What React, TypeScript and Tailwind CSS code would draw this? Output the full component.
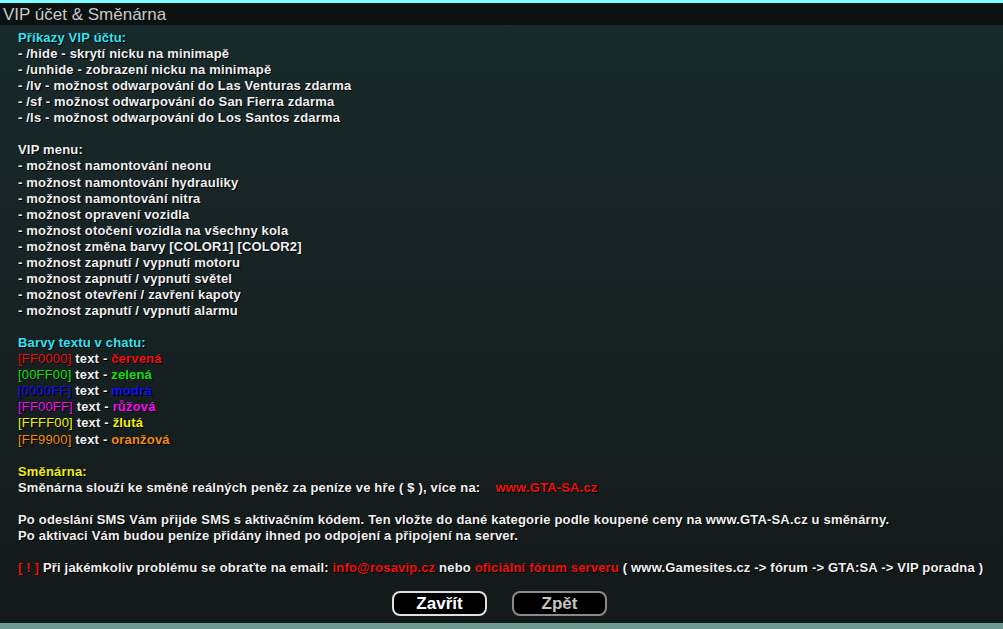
import React from 'react';

// SA:MP style dialog
const shadow = "[text-shadow:1px_1px_0_#000]";

const commands = [
    "- /hide - skrytí nicku na minimapě",
    "- /unhide - zobrazení nicku na minimapě",
    "- /lv - možnost odwarpování do Las Venturas zdarma",
    "- /sf - možnost odwarpování do San Fierra zdarma",
    "- /ls - možnost odwarpování do Los Santos zdarma",
];

const menu = [
    "- možnost namontování neonu",
    "- možnost namontování hydrauliky",
    "- možnost namontování nitra",
    "- možnost opravení vozidla",
    "- možnost otočení vozidla na všechny kola",
    "- možnost změna barvy [COLOR1] [COLOR2]",
    "- možnost zapnutí / vypnutí motoru",
    "- možnost zapnutí / vypnutí světel",
    "- možnost otevření / zavření kapoty",
    "- možnost zapnutí / vypnutí alarmu",
];

const colors = [
    { code: "[FF0000]", name: "červená", cls: "text-[#f01010]" },
    { code: "[00FF00]", name: "zelená", cls: "text-[#10e010]" },
    { code: "[0000FF]", name: "modrá", cls: "text-[#1010f0]" },
    { code: "[FF00FF]", name: "růžová", cls: "text-[#f010f0]" },
    { code: "[FFFF00]", name: "žlutá", cls: "text-[#f0f010]" },
    { code: "[FF9900]", name: "oranžová", cls: "text-[#f08c10]" },
];

const Blank = () => <div className="h-[16.06px]" />;

export default function App() {
    return (
        <div className="w-[1003px] h-[629px] flex flex-col bg-[#151b1b] font-['Liberation_Sans',Arial,sans-serif] overflow-hidden">
            <div className="h-[3px] bg-[#7ffcff]" />
            <div className="h-[22px] bg-[#0c1111] flex items-center px-[3px]">
                <span className="text-[#c8c8c8] text-[17px] leading-none">VIP účet &amp; Směnárna</span>
            </div>
            <div className="flex-1 flex flex-col bg-gradient-to-b from-[#182a2b] to-[#141919]">
                <div className={`pl-[18px] pt-[5px] text-[13px] tracking-[0.18px] leading-[16.06px] font-bold text-[#f0f0f0] whitespace-pre ${shadow}`}>
                    <div className="text-[#30e4f4]">Příkazy VIP účtu:</div>
                    {commands.map((c) => <div key={c}>{c}</div>)}
                    <Blank />
                    <div>VIP menu:</div>
                    {menu.map((m) => <div key={m}>{m}</div>)}
                    <Blank />
                    <div className="text-[#30e4f4]">Barvy textu v chatu:</div>
                    {colors.map(({ code, name, cls }) => (
                        <div key={code}>
                            <span className={`font-normal ${cls}`}>{code}</span> text - <span className={cls}>{name}</span>
                        </div>
                    ))}
                    <Blank />
                    <div className="text-[#f0f010]">Směnárna:</div>
                    <div>Směnárna slouží ke směně reálných peněz za peníze ve hře ( $ ), více na:    <span className="text-[#f01010]">www.GTA-SA.cz</span></div>
                    <Blank />
                    <div>Po odeslání SMS Vám přijde SMS s aktivačním kódem. Ten vložte do dané kategorie podle koupené ceny na www.GTA-SA.cz u směnárny.</div>
                    <div>Po aktivaci Vám budou peníze přidány ihned po odpojení a připojení na server.</div>
                    <Blank />
                    <div>
                        <span className="text-[#f01010]">[ ! ]</span> Při jakémkoliv problému se obraťte na email: <span className="text-[#f01010]">info@rosavip.cz</span> nebo <span className="text-[#f01010]">oficiální fórum serveru</span> ( www.Gamesites.cz -&gt; fórum -&gt; GTA:SA -&gt; VIP poradna )
                    </div>
                </div>
                <div className="flex justify-center gap-[25px] mt-auto mb-[7px] pr-[4px]">
                    <button className={`w-[95px] h-[25px] rounded-[8px] border-2 border-[#e0e0e0] bg-black text-white text-[17px] font-bold leading-none ${shadow}`}>Zavřít</button>
                    <button className={`w-[95px] h-[25px] rounded-[8px] border-2 border-[#8a8a8a] bg-black text-[#c4c4c4] text-[17px] font-bold leading-none ${shadow}`}>Zpět</button>
                </div>
            </div>
            <div className="h-[6px] bg-[#6f9a94]" />
        </div>
    );
}
